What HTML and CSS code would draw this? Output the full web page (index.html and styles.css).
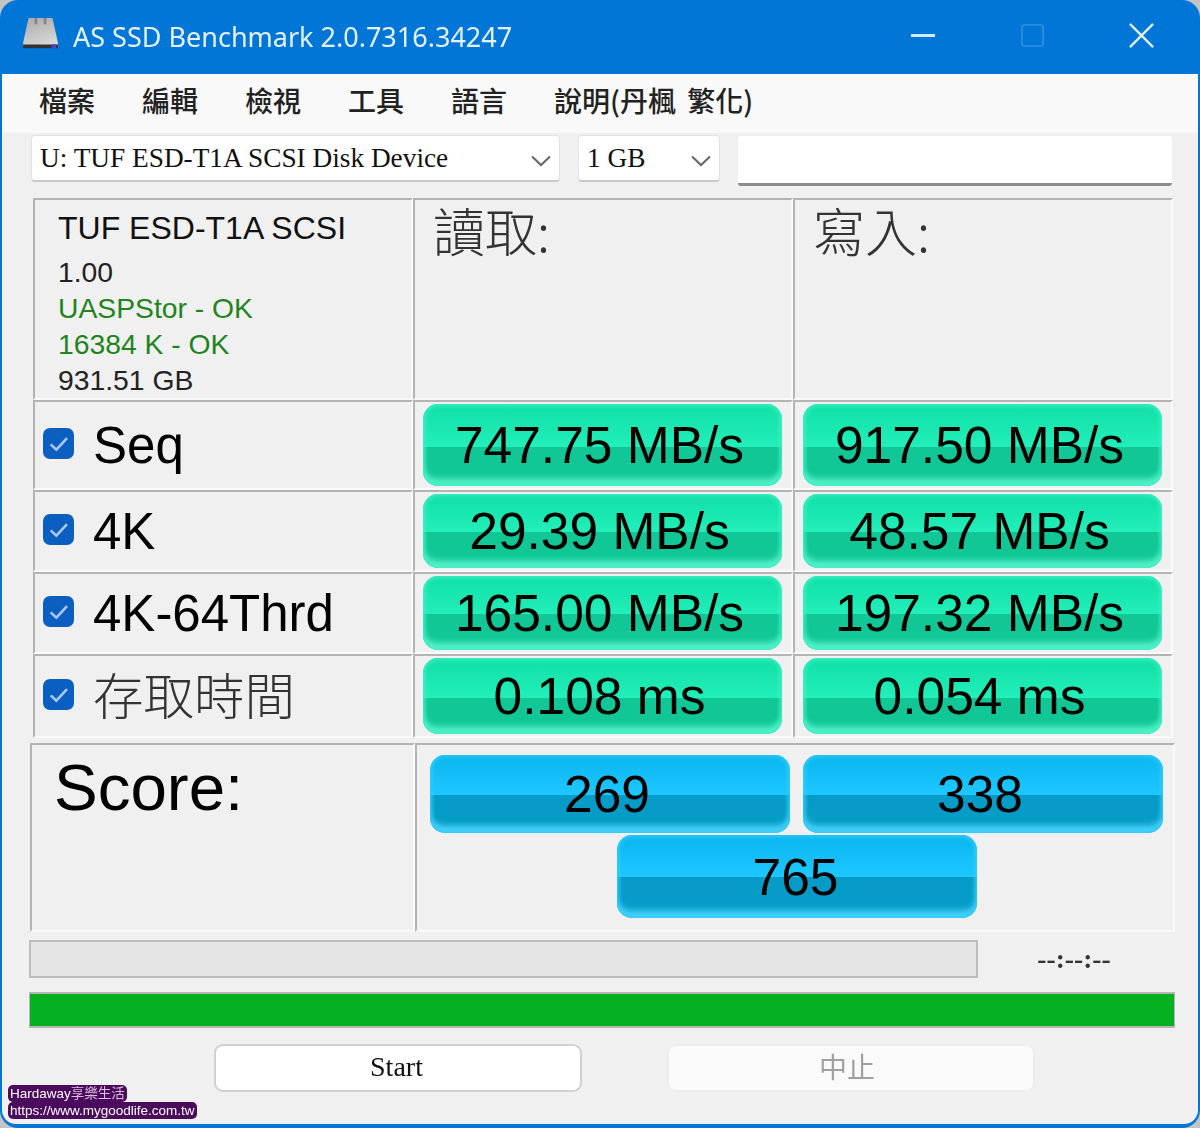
FILE: index.html
```html
<!DOCTYPE html>
<html lang="zh-Hant">
<head>
<meta charset="utf-8">
<title>AS SSD Benchmark</title>
<link rel="stylesheet" href="styles.css">
</head>
<body>
<div class="window">
  <header class="titlebar">
    <svg class="app-icon" viewBox="0 0 40 36" aria-hidden="true">
      <defs>
        <linearGradient id="disk" x1="0" y1="0" x2="0.4" y2="1">
          <stop offset="0" stop-color="#a9a9a9"/>
          <stop offset="1" stop-color="#d6d6d6"/>
        </linearGradient>
      </defs>
      <path d="M7 1 H33 L39 28 V33 H1 V28 Z" fill="url(#disk)"/>
      <path d="M15 1 V8 M25 1 V8" stroke="#858585" stroke-width="3"/>
      <rect x="1" y="30" width="38" height="4" fill="#333"/>
      <rect x="32" y="30" width="5" height="4" fill="#4a3fd0"/>
    </svg>
    <span class="title">AS SSD Benchmark 2.0.7316.34247</span>
    <div class="caption">
      <svg class="cap-btn" viewBox="0 0 28 28" aria-hidden="true"><path d="M1 14 H26" stroke="#dcecfb" stroke-width="3"/></svg>
      <svg class="cap-btn" viewBox="0 0 28 28" aria-hidden="true"><rect x="3" y="3" width="22" height="22" rx="3" fill="none" stroke="#2b8be0" stroke-width="2"/></svg>
      <svg class="cap-btn" viewBox="0 0 28 28" aria-hidden="true"><path d="M2 2 L26 26 M26 2 L2 26" stroke="#e4f0fb" stroke-width="2.4"/></svg>
    </div>
  </header>
  <main class="client">
    <nav class="menu">
      <span>檔案</span><span>編輯</span><span>檢視</span><span>工具</span><span>語言</span><span class="menu-last">說明(丹楓 繁化)</span>
    </nav>
    <div class="controls">
      <div class="combo combo-drive"><span>U: TUF ESD-T1A SCSI Disk Device</span><svg class="chev" viewBox="0 0 20 12" aria-hidden="true"><path d="M1 1.5 L10 10 L19 1.5" fill="none" stroke="#666" stroke-width="2"/></svg></div>
      <div class="combo combo-size"><span>1 GB</span><svg class="chev" viewBox="0 0 20 12" aria-hidden="true"><path d="M1 1.5 L10 10 L19 1.5" fill="none" stroke="#666" stroke-width="2"/></svg></div>
      <div class="textbox"></div>
    </div>
    <section class="results">
      <div class="cell info">
        <div class="info-name">TUF ESD-T1A SCSI</div>
        <div class="info-line">1.00</div>
        <div class="info-line ok">UASPStor - OK</div>
        <div class="info-line ok">16384 K - OK</div>
        <div class="info-line">931.51 GB</div>
      </div>
      <div class="cell head">讀取:</div>
      <div class="cell head">寫入:</div>

      <div class="cell label"><span class="check"><svg viewBox="0 0 20 20" aria-hidden="true"><path d="M5 10.5 L8.6 14 L15.5 6.5" fill="none" stroke="#a9c9ee" stroke-width="1.6"/></svg></span><span>Seq</span></div>
      <div class="cell val"><div class="bar green">747.75 MB/s</div></div>
      <div class="cell val"><div class="bar green">917.50 MB/s</div></div>

      <div class="cell label"><span class="check"><svg viewBox="0 0 20 20" aria-hidden="true"><path d="M5 10.5 L8.6 14 L15.5 6.5" fill="none" stroke="#a9c9ee" stroke-width="1.6"/></svg></span><span>4K</span></div>
      <div class="cell val"><div class="bar green">29.39 MB/s</div></div>
      <div class="cell val"><div class="bar green">48.57 MB/s</div></div>

      <div class="cell label"><span class="check"><svg viewBox="0 0 20 20" aria-hidden="true"><path d="M5 10.5 L8.6 14 L15.5 6.5" fill="none" stroke="#a9c9ee" stroke-width="1.6"/></svg></span><span>4K-64Thrd</span></div>
      <div class="cell val"><div class="bar green">165.00 MB/s</div></div>
      <div class="cell val"><div class="bar green">197.32 MB/s</div></div>

      <div class="cell label"><span class="check"><svg viewBox="0 0 20 20" aria-hidden="true"><path d="M5 10.5 L8.6 14 L15.5 6.5" fill="none" stroke="#a9c9ee" stroke-width="1.6"/></svg></span><span class="cjk-label">存取時間</span></div>
      <div class="cell val"><div class="bar green">0.108 ms</div></div>
      <div class="cell val"><div class="bar green">0.054 ms</div></div>
    </section>
    <section class="score">
      <div class="cell score-label">Score:</div>
      <div class="cell score-vals">
        <div class="score-row">
          <div class="bar blue">269</div>
          <div class="bar blue">338</div>
        </div>
        <div class="bar blue total">765</div>
      </div>
    </section>
    <div class="status">
      <div class="progress"></div>
      <div class="time">--:--:--</div>
    </div>
    <div class="done"></div>
    <div class="buttons">
      <button class="btn" type="button">Start</button>
      <button class="btn btn-off" type="button">中止</button>
    </div>
    <div class="watermark">
      <span>Hardaway<i class="wm-cjk">享樂生活</i></span>
      <span>https://www.mygoodlife.com.tw</span>
    </div>
  </main>
</div>
</body>
</html>
```

FILE: styles.css
```css
* { box-sizing: border-box; }
html, body { margin: 0; padding: 0; background: #c4c4c4; }
body { font-family: "Liberation Sans", Arial, sans-serif; color: #000; }

.window {
  position: relative;
  width: 1200px;
  height: 1128px;
  display: flex;
  flex-direction: column;
  background: #0176d6;
  border-radius: 18px;
  overflow: hidden;
  filter: blur(0.5px);
}

.titlebar {
  height: 73px;
  flex: none;
  display: flex;
  align-items: center;
  padding-left: 22px;
  color: #e4f1fc;
}
.app-icon { width: 37px; height: 33px; margin-top: -6px; }
.title {
  margin-left: 14px;
  font-family: "Noto Sans", sans-serif;
  font-size: 27px;
  white-space: nowrap;
}
.caption {
  margin-left: auto;
  display: flex;
  gap: 82px;
  padding-right: 45px;
  margin-top: -2px;
}
.cap-btn { width: 27px; height: 27px; }

.client {
  flex: 1;
  margin: 1px 2px 4px;
  background: #f0f0f0;
  border-radius: 0 0 14px 14px;
  display: flex;
  flex-direction: column;
}

.menu {
  height: 59px;
  flex: none;
  display: flex;
  align-items: center;
  gap: 47px;
  padding: 0 0 8px 37px;
  background: #f9f9f9;
  font-family: "Noto Sans CJK TC", sans-serif;
  font-size: 28px;
  font-weight: 500;
  color: #222;
  white-space: nowrap;
}
.menu-last { word-spacing: 5px; }

.controls {
  height: 50px;
  margin-top: 2px;
  flex: none;
  display: flex;
  padding-left: 29px;
  gap: 18px;
  align-items: flex-start;
}
.combo {
  height: 47px;
  display: flex;
  align-items: center;
  justify-content: space-between;
  background: #fff;
  border: 1px solid #e2e2e2;
  border-bottom: 2px solid #c8c8c8;
  border-radius: 4px;
  padding: 0 8px 0 8px;
  font-family: "Liberation Serif", serif;
  font-size: 27.3px;
  color: #111;
  white-space: nowrap;
}
.combo-drive { width: 529px; }
.combo-size { width: 142px; }
.chev { width: 20px; height: 12px; margin-top: 5px; }
.textbox {
  width: 434px;
  height: 50px;
  margin-top: 1px;
  background: #fff;
  border-bottom: 3px solid #8c8c8c;
  border-radius: 3px;
}

.results {
  margin: 13px 0 0 31px;
  display: grid;
  grid-template-columns: 380px 380px 380px;
  grid-template-rows: 202px 90px 82px 82px 84px;
  width: 1140px;
  flex: none;
}
.cell {
  border-top: 2px solid #b4b4b4;
  border-left: 2px solid #b4b4b4;
  border-right: 2px solid #fafafa;
  border-bottom: 2px solid #fafafa;
  min-width: 0;
}

.info { padding: 10px 0 0 23px; }
.info-name { font-size: 32px; line-height: 36px; margin-bottom: 8px; color: #111; white-space: nowrap; }
.info-line { font-size: 28.3px; line-height: 36px; color: #222; white-space: nowrap; }
.ok { color: #1f8420; }

.head {
  padding: 0 0 0 18px;
  font-family: "Noto Sans CJK TC", sans-serif;
  font-weight: 300;
  font-size: 52px;
  line-height: 60px;
  color: #333;
}

.label {
  display: flex;
  align-items: center;
  padding-left: 8px;
  gap: 19px;
  font-size: 51px;
  white-space: nowrap;
}
.cjk-label {
  font-family: "Noto Sans CJK TC", sans-serif;
  font-weight: 300;
  font-size: 50.5px;
  color: #333;
  margin-top: -6px;
}
.check {
  width: 31px;
  height: 31px;
  flex: none;
  background: #0a5fc0;
  border-radius: 7px;
  margin-top: -4px;
  display: flex;
}
.check svg { width: 100%; height: 100%; }

.val { padding: 2px 9px 2px 8px; display: flex; }

.bar {
  flex: 1;
  display: flex;
  align-items: center;
  justify-content: center;
  padding-right: 6px;
  font-size: 51.5px;
  color: #000;
  border-radius: 15px;
  white-space: nowrap;
}
.green {
  background: linear-gradient(to bottom, #10dfa6 0, #22efb9 52%, #10c795 52%);
  box-shadow: inset 0 0 4px 2px #3cefc2, inset 0 -9px 6px -2px #5df4cd;
}
.blue {
  background: linear-gradient(to bottom, #0ab5ee 0, #1ec7ff 51%, #069cc7 51%);
  box-shadow: inset 0 0 4px 2px #2ecbfb, inset 0 -9px 6px -2px #4fd6fd;
}

.score {
  margin: 5px 0 0 28px;
  width: 1145px;
  height: 189px;
  flex: none;
  display: grid;
  grid-template-columns: 385px 760px;
}
.score-label {
  padding: 5px 0 0 22px;
  font-size: 65.5px;
  line-height: 75px;
}
.score-vals {
  padding: 10px 0 0 13px;
  display: flex;
  flex-direction: column;
}
.score-row {
  width: 733px;
  height: 78px;
  display: flex;
  gap: 13px;
}
.score-row .bar { flex: none; width: 360px; }
.total { flex: none; width: 360px; height: 83px; margin: 2px 0 0 187px; padding-right: 3px; }

.status {
  margin: 8px 0 0 27px;
  height: 38px;
  flex: none;
  display: flex;
  align-items: center;
}
.progress {
  width: 949px;
  height: 38px;
  background: #e5e5e5;
  border: 2px solid #bdbdbd;
}
.time {
  width: 192px;
  text-align: center;
  font-family: "Liberation Serif", serif;
  font-weight: 700;
  font-size: 27.5px;
  color: #333;
}

.done {
  margin: 14px 0 0 27px;
  width: 1146px;
  height: 36px;
  flex: none;
  background: #05b021;
  border: 2px solid #b6b6b6;
  border-width: 2px 1px;
}

.buttons {
  margin: 16px 0 0 212px;
  flex: none;
  display: flex;
  gap: 85px;
}
.btn {
  width: 368px;
  height: 48px;
  padding: 0 3px 2px 0;
  background: #fff;
  border: 2px solid #d0d0d0;
  border-radius: 9px;
  font-family: "Liberation Serif", serif;
  font-size: 28px;
  color: #111;
}
.btn-off {
  padding: 0 8px 5px 0;
  background: #fafafa;
  border-color: #ededed;
  font-family: "Noto Sans CJK TC", sans-serif;
  font-size: 28px;
  color: #a0a0a0;
}

.watermark {
  position: absolute;
  left: 8px;
  top: 1085px;
  display: flex;
  flex-direction: column;
  align-items: flex-start;
  font-family: "Liberation Sans", "Noto Sans CJK TC", sans-serif;
  font-size: 13.5px;
  line-height: 17px;
  color: #fff;
}
.watermark span {
  background: #4b0a5c;
  border-radius: 5px;
  padding: 0 2px;
  white-space: nowrap;
}
.wm-cjk { font-style: normal; color: #d9bcdc; }
```
